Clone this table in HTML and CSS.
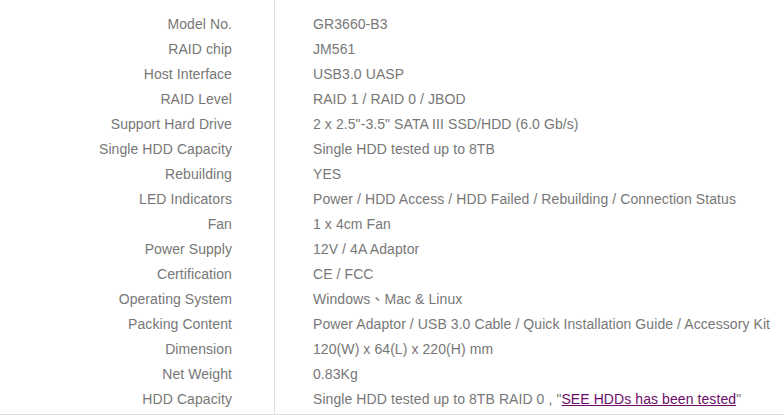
FILE: index.html
```html
<!DOCTYPE html>
<html>
<head>
<meta charset="utf-8">
<link rel="stylesheet" href="styles.css">
</head>
<body>
<div class="spec">
  <div class="col labels">
    <div class="cell">Model No.</div>
    <div class="cell">RAID chip</div>
    <div class="cell">Host Interface</div>
    <div class="cell">RAID Level</div>
    <div class="cell">Support Hard Drive</div>
    <div class="cell">Single HDD Capacity</div>
    <div class="cell">Rebuilding</div>
    <div class="cell">LED Indicators</div>
    <div class="cell">Fan</div>
    <div class="cell">Power Supply</div>
    <div class="cell">Certification</div>
    <div class="cell">Operating System</div>
    <div class="cell">Packing Content</div>
    <div class="cell">Dimension</div>
    <div class="cell">Net Weight</div>
    <div class="cell">HDD Capacity</div>
  </div>
  <div class="col values">
    <div class="cell">GR3660-B3</div>
    <div class="cell">JM561</div>
    <div class="cell">USB3.0 UASP</div>
    <div class="cell">RAID 1 / RAID 0 / JBOD</div>
    <div class="cell">2 x 2.5"-3.5" SATA III SSD/HDD (6.0 Gb/s)</div>
    <div class="cell">Single HDD tested up to 8TB</div>
    <div class="cell">YES</div>
    <div class="cell">Power / HDD Access / HDD Failed / Rebuilding / Connection Status</div>
    <div class="cell">1 x 4cm Fan</div>
    <div class="cell">12V / 4A Adaptor</div>
    <div class="cell">CE / FCC</div>
    <div class="cell">Windows、Mac &amp; Linux</div>
    <div class="cell">Power Adaptor / USB 3.0 Cable / Quick Installation Guide / Accessory Kit</div>
    <div class="cell">120(W) x 64(L) x 220(H) mm</div>
    <div class="cell">0.83Kg</div>
    <div class="cell">Single HDD tested up to 8TB RAID 0 , "<a class="link" href="#">SEE HDDs has been tested</a>"</div>
  </div>
</div>
</body>
</html>
```
FILE: styles.css
```css
html, body {
  margin: 0;
  padding: 0;
  background: #fff;
}
body {
  font-family: "Liberation Sans", Arial, "Noto Sans CJK TC", sans-serif;
  font-size: 14px;
  letter-spacing: 0.08px;
  color: #777;
}
.spec {
  display: flex;
  width: 784px;
  height: 415px;
  box-sizing: border-box;
  border-bottom: 1px solid #ddd;
}
.col {
  display: flex;
  flex-direction: column;
  padding-top: 12px;
}
.labels {
  width: 275px;
  border-right: 1px solid #ddd;
  text-align: right;
  padding-right: 42px;
  box-sizing: border-box;
}
.values {
  padding-left: 38px;
  flex: 1;
}
.cell {
  height: 25px;
  line-height: 25px;
  white-space: nowrap;
}
.link {
  color: #6b0d6b;
  text-decoration: underline;
}
```
